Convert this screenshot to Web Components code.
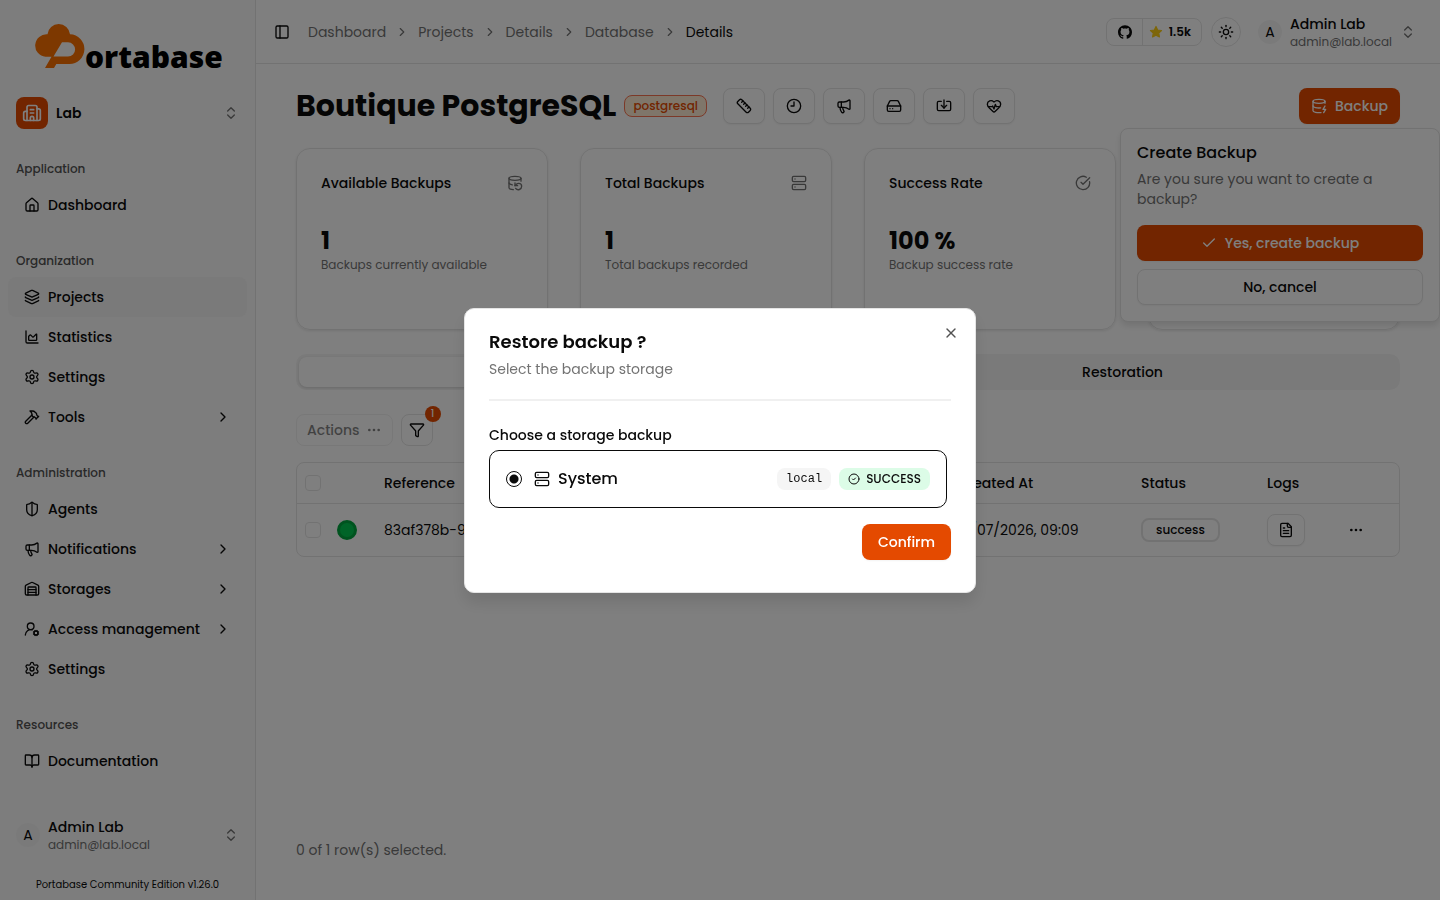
<!DOCTYPE html>
<html lang="en">
<head>
<meta charset="UTF-8">
<meta name="viewport" content="width=device-width, initial-scale=1.0">
<title>Portabase</title>
<style>
  :root {
    --primary: #e44a00;
    --text: #0a0a0a;
    --muted: #737373;
    --border: #e5e5e5;
    --accent: #f5f5f5;
    --sidebar: #fafafa;
  }
  body {
    margin: 0;
    background: #fff;
    color: var(--text);
    font-family: Poppins, Inter, sans-serif;
    font-size: 14px;
    line-height: 20px;
  }
</style>
</head>
<body>
<app-layout>
  <app-sidebar slot="sidebar">
    <nav-section heading="Application">
      <nav-item icon="house">Dashboard</nav-item>
    </nav-section>
    <nav-section heading="Organization">
      <nav-item icon="layers" active>Projects</nav-item>
      <nav-item icon="chart">Statistics</nav-item>
      <nav-item icon="settings">Settings</nav-item>
      <nav-item icon="hammer" expandable>Tools</nav-item>
    </nav-section>
    <nav-section heading="Administration">
      <nav-item icon="shield">Agents</nav-item>
      <nav-item icon="megaphone" expandable>Notifications</nav-item>
      <nav-item icon="warehouse" expandable>Storages</nav-item>
      <nav-item icon="user-cog" expandable>Access management</nav-item>
      <nav-item icon="settings">Settings</nav-item>
    </nav-section>
    <nav-section heading="Resources">
      <nav-item icon="book">Documentation</nav-item>
    </nav-section>
  </app-sidebar>

  <app-topbar slot="topbar"></app-topbar>

  <page-header heading="Boutique PostgreSQL" tag="postgresql">
    <app-button icon="ruler" label="Health thresholds"></app-button>
    <app-button icon="clock" label="Schedule"></app-button>
    <app-button icon="megaphone" label="Notifications"></app-button>
    <app-button icon="drive" label="Storage"></app-button>
    <app-button icon="import" label="Import"></app-button>
    <app-button icon="pulse" label="Health"></app-button>
    <backup-popover slot="end"></backup-popover>
  </page-header>

  <stat-grid>
    <stat-card icon="db-backup" heading="Available Backups" value="1">Backups currently available</stat-card>
    <stat-card icon="server" heading="Total Backups" value="1">Total backups recorded</stat-card>
    <stat-card icon="check-big" heading="Success Rate" value="100 %">Backup success rate</stat-card>
    <stat-card></stat-card>
  </stat-grid>

  <tab-bar></tab-bar>
  <backup-table></backup-table>
</app-layout>
<restore-dialog></restore-dialog>

<script>
  const DB_TOP = '<ellipse cx="12" cy="5" rx="9" ry="3"/>';

  const ICONS = {
    house: '<path d="M15 21v-8a1 1 0 0 0-1-1h-4a1 1 0 0 0-1 1v8"/><path d="M3 10a2 2 0 0 1 .709-1.528l7-5.999a2 2 0 0 1 2.582 0l7 5.999A2 2 0 0 1 21 10v9a2 2 0 0 1-2 2H5a2 2 0 0 1-2-2z"/>',
    layers: '<path d="M12.83 2.18a2 2 0 0 0-1.66 0L2.6 6.08a1 1 0 0 0 0 1.83l8.58 3.91a2 2 0 0 0 1.66 0l8.58-3.9a1 1 0 0 0 0-1.83z"/><path d="M2 12a1 1 0 0 0 .58.91l8.6 3.91a2 2 0 0 0 1.65 0l8.58-3.9A1 1 0 0 0 22 12"/><path d="M2 17a1 1 0 0 0 .58.91l8.6 3.91a2 2 0 0 0 1.65 0l8.58-3.9A1 1 0 0 0 22 17"/>',
    chart: '<path d="M3 3v16a2 2 0 0 0 2 2h16"/><path d="M7 11.207a.5.5 0 0 1 .146-.353l2-2a.5.5 0 0 1 .708 0l3.292 3.292a.5.5 0 0 0 .708 0l4.292-4.292a.5.5 0 0 1 .854.353V16a1 1 0 0 1-1 1H8a1 1 0 0 1-1-1z"/>',
    settings: '<path d="M9.671 4.136a2.34 2.34 0 0 1 4.659 0 2.34 2.34 0 0 0 3.319 1.915 2.34 2.34 0 0 1 2.33 4.033 2.34 2.34 0 0 0 0 3.831 2.34 2.34 0 0 1-2.33 4.033 2.34 2.34 0 0 0-3.319 1.915 2.34 2.34 0 0 1-4.659 0 2.34 2.34 0 0 0-3.32-1.915 2.34 2.34 0 0 1-2.33-4.033 2.34 2.34 0 0 0 0-3.831A2.34 2.34 0 0 1 6.35 6.051a2.34 2.34 0 0 0 3.319-1.915"/><circle cx="12" cy="12" r="3"/>',
    hammer: '<path d="m15 12-9.373 9.373a1 1 0 0 1-3.001-3L12 9"/><path d="m18 15 4-4"/><path d="m21.5 11.5-1.914-1.914A2 2 0 0 1 19 8.172v-.344a2 2 0 0 0-.586-1.414l-1.657-1.657A6 6 0 0 0 12.516 3H9l1.243 1.243A6 6 0 0 1 12 8.485V10l2 2h1.172a2 2 0 0 1 1.414.586L18.5 14.5"/>',
    shield: '<path d="M20 13c0 5-3.5 7.5-7.66 8.95a1 1 0 0 1-.67-.01C7.5 20.5 4 18 4 13V6a1 1 0 0 1 1-1c2 0 4.5-1.2 6.24-2.72a1.17 1.17 0 0 1 1.52 0C14.51 3.81 17 5 19 5a1 1 0 0 1 1 1z"/><path d="M12 22V2"/>',
    megaphone: '<path d="M11 6a13 13 0 0 0 8.4-2.8A1 1 0 0 1 21 4v12a1 1 0 0 1-1.6.8A13 13 0 0 0 11 14H5a2 2 0 0 1-2-2V8a2 2 0 0 1 2-2z"/><path d="M6 14a12 12 0 0 0 2.4 7.2 2 2 0 0 0 3.2-2.4A8 8 0 0 1 10 14"/><path d="M8 6v8"/>',
    warehouse: '<path d="M18 21V10a1 1 0 0 0-1-1H7a1 1 0 0 0-1 1v11"/><path d="M22 19a2 2 0 0 1-2 2H4a2 2 0 0 1-2-2V8a2 2 0 0 1 1.132-1.803l7.95-3.974a2 2 0 0 1 1.837 0l7.948 3.974A2 2 0 0 1 22 8z"/><path d="M6 13h12"/><path d="M6 17h12"/>',
    'user-cog': '<path d="m14.305 19.53.923-.382"/><path d="m15.228 16.852-.923-.383"/><path d="m16.852 15.228-.383-.923"/><path d="m16.852 20.772-.383.924"/><path d="m19.148 15.228.383-.923"/><path d="m19.53 21.696-.382-.924"/><path d="M2 21a8 8 0 0 1 10.434-7.62"/><path d="m20.772 16.852.924-.383"/><path d="m20.772 19.148.924.383"/><circle cx="10" cy="8" r="5"/><circle cx="18" cy="18" r="3"/>',
    book: '<path d="M12 7v14"/><path d="M3 18a1 1 0 0 1-1-1V4a1 1 0 0 1 1-1h5a4 4 0 0 1 4 4 4 4 0 0 1 4-4h5a1 1 0 0 1 1 1v13a1 1 0 0 1-1 1h-6a3 3 0 0 0-3 3 3 3 0 0 0-3-3z"/>',
    building: '<path d="M10 12h4"/><path d="M10 8h4"/><path d="M14 21v-3a2 2 0 0 0-4 0v3"/><path d="M6 10H4a2 2 0 0 0-2 2v7a2 2 0 0 0 2 2h16a2 2 0 0 0 2-2V9a2 2 0 0 0-2-2h-2"/><path d="M6 21V5a2 2 0 0 1 2-2h8a2 2 0 0 1 2 2v16"/>',
    updown: '<path d="m7 15 5 5 5-5"/><path d="m7 9 5-5 5 5"/>',
    chevron: '<path d="m9 18 6-6-6-6"/>',
    panel: '<rect width="18" height="18" x="3" y="3" rx="2"/><path d="M9 3v18"/>',
    sun: '<circle cx="12" cy="12" r="4"/><path d="M12 2v2"/><path d="M12 20v2"/><path d="m4.93 4.93 1.41 1.41"/><path d="m17.66 17.66 1.41 1.41"/><path d="M2 12h2"/><path d="M20 12h2"/><path d="m6.34 17.66-1.41 1.41"/><path d="m19.07 4.93-1.41 1.41"/>',
    github: '<path fill="currentColor" stroke="none" d="M12 .297c-6.63 0-12 5.373-12 12 0 5.303 3.438 9.8 8.205 11.385.6.113.82-.258.82-.577 0-.285-.01-1.04-.015-2.04-3.338.724-4.042-1.61-4.042-1.61C4.422 18.07 3.633 17.7 3.633 17.7c-1.087-.744.084-.729.084-.729 1.205.084 1.838 1.236 1.838 1.236 1.07 1.835 2.809 1.305 3.495.998.108-.776.417-1.305.76-1.605-2.665-.3-5.466-1.332-5.466-5.93 0-1.31.465-2.38 1.235-3.22-.135-.303-.54-1.523.105-3.176 0 0 1.005-.322 3.3 1.23.96-.267 1.98-.399 3-.405 1.02.006 2.04.138 3 .405 2.28-1.552 3.285-1.23 3.285-1.23.645 1.653.24 2.873.12 3.176.765.84 1.23 1.91 1.23 3.22 0 4.61-2.805 5.625-5.475 5.92.42.36.81 1.096.81 2.22 0 1.606-.015 2.896-.015 3.286 0 .315.21.69.825.57C20.565 22.092 24 17.592 24 12.297c0-6.627-5.373-12-12-12"/>',
    star: '<path fill="#facc15" stroke="#facc15" d="m12 2.5 2.9 6 6.6.9-4.8 4.6 1.2 6.5-5.9-3.1-5.9 3.1 1.2-6.5L2.5 9.4l6.6-.9z"/>',
    ruler: '<path d="M21.3 15.3a2.4 2.4 0 0 1 0 3.4l-2.6 2.6a2.4 2.4 0 0 1-3.4 0L2.7 8.7a2.41 2.41 0 0 1 0-3.4l2.6-2.6a2.41 2.41 0 0 1 3.4 0Z"/><path d="m14.5 12.5 2-2"/><path d="m11.5 9.5 2-2"/><path d="m8.5 6.5 2-2"/><path d="m17.5 15.5 2-2"/>',
    clock: '<circle cx="12" cy="12" r="10"/><path d="M12 6v6H7.5"/>',
    drive: '<path d="M22 12H2"/><path d="M5.45 5.11 2 12v6a2 2 0 0 0 2 2h16a2 2 0 0 0 2-2v-6l-3.45-6.89A2 2 0 0 0 16.76 4H7.24a2 2 0 0 0-1.79 1.11z"/><path d="M6 16h.01"/><path d="M10 16h.01"/>',
    import: '<path d="M12 3v12"/><path d="m8 11 4 4 4-4"/><path d="M8 5H4a2 2 0 0 0-2 2v10a2 2 0 0 0 2 2h16a2 2 0 0 0 2-2V7a2 2 0 0 0-2-2h-4"/>',
    pulse: '<path d="M2 9.5a5.5 5.5 0 0 1 9.591-3.676.56.56 0 0 0 .818 0A5.49 5.49 0 0 1 22 9.5c0 2.29-1.5 4-3 5.5l-5.492 5.313a2 2 0 0 1-3 .019L5 15c-1.5-1.5-3-3.2-3-5.5"/><path d="M3.22 13H9.5l.5-1 2 4.5 2-7 1.5 3.5h5.27"/>',
    'db-zap': DB_TOP + '<path d="M3 5V19A9 3 0 0 0 15 21.84"/><path d="M21 5V8"/><path d="M21 12L18 17H22L19 22"/><path d="M3 12A9 3 0 0 0 14.59 14.87"/>',
    'db-backup': DB_TOP + '<path d="M3 12a9 3 0 0 0 5 2.69"/><path d="M21 9.3V5"/><path d="M3 5v14a9 3 0 0 0 6.47 2.88"/><path d="M12 12v4h4"/><path d="M13 20a5 5 0 0 0 9-3 4.5 4.5 0 0 0-4.5-4.5c-1.33 0-2.54.54-3.41 1.41L12 16"/>',
    server: '<rect width="20" height="8" x="2" y="2" rx="2"/><rect width="20" height="8" x="2" y="14" rx="2"/><path d="M6 6h.01"/><path d="M6 18h.01"/>',
    'check-big': '<path d="M21.801 10A10 10 0 1 1 17 3.335"/><path d="m9 11 3 3L22 4"/>',
    'check-circle': '<circle cx="12" cy="12" r="10"/><path d="m9 12 2 2 4-4"/>',
    check: '<path d="M20 6 9 17l-5-5"/>',
    x: '<path d="M18 6 6 18"/><path d="m6 6 12 12"/>',
    dots: '<circle cx="12" cy="12" r="1"/><circle cx="19" cy="12" r="1"/><circle cx="5" cy="12" r="1"/>',
    funnel: '<path d="M10 20a1 1 0 0 0 .553.895l2 1A1 1 0 0 0 14 21v-7a2 2 0 0 1 .517-1.341L21.74 4.67A1 1 0 0 0 21 3H3a1 1 0 0 0-.742 1.67l7.225 7.989A2 2 0 0 1 10 14z"/>',
    file: '<path d="M15 2H6a2 2 0 0 0-2 2v16a2 2 0 0 0 2 2h12a2 2 0 0 0 2-2V7Z"/><path d="M14 2v4a2 2 0 0 0 2 2h4"/><path d="M10 9H8"/><path d="M16 13H8"/><path d="M16 17H8"/>'
  };

  const BASE = `
    * { margin: 0; padding: 0; box-sizing: border-box; }
    :host { display: block; box-sizing: border-box; }
    button { font: inherit; color: inherit; background: none; border: none; cursor: pointer; }
    a { color: inherit; text-decoration: none; }
  `;

  class BaseElement extends HTMLElement {
    connectedCallback() {
      if (this.shadowRoot) return;
      this.attachShadow({ mode: 'open' });
      this.shadowRoot.innerHTML = `<style>${BASE}${this.styles()}</style>${this.render()}`;
    }
  }

  class AppIcon extends BaseElement {
    styles() {
      return `
        :host { display: inline-flex; flex: none; width: 16px; height: 16px; }
        svg { width: 100%; height: 100%; }
      `;
    }
    render() {
      return `<svg viewBox="0 0 24 24" fill="none" stroke="currentColor" stroke-width="2" stroke-linecap="round" stroke-linejoin="round" aria-hidden="true">${ICONS[this.getAttribute('name')]}</svg>`;
    }
  }
  customElements.define('app-icon', AppIcon);

  class AppButton extends BaseElement {
    styles() {
      return `
        button {
          display: flex;
          align-items: center;
          justify-content: center;
          gap: 8px;
          width: 100%;
          height: 36px;
          padding: 0 12px;
          border: 1px solid var(--border);
          border-radius: 8px;
          background: #fff;
          box-shadow: 0 1px 2px rgba(0, 0, 0, 0.05);
          font-weight: 500;
        }
        :host(:not([icon])) button { padding: 0 16px; }
        :host([variant="primary"]) button {
          border: none;
          background: var(--primary);
          color: #fff;
        }
        :host([label]) button { width: 42px; }
        :host([size="sm"]) button { height: 32px; width: 38px; padding: 0; }
      `;
    }
    render() {
      const icon = this.getAttribute('icon');
      const label = this.getAttribute('label');
      return `
        <button type="button" ${label ? `aria-label="${label}"` : ''}>
          ${icon ? `<app-icon name="${icon}"></app-icon>` : ''}<slot></slot>
        </button>
      `;
    }
  }
  customElements.define('app-button', AppButton);

  class UserMenu extends BaseElement {
    styles() {
      return `
        button { display: flex; align-items: center; width: 100%; gap: 8px; text-align: left; }
        .avatar {
          display: grid;
          place-items: center;
          width: 24px;
          height: 24px;
          border-radius: 50%;
          background: var(--accent);
        }
        .who { flex: 1; }
        .name { display: block; font-weight: 500; }
        .mail { display: block; font-size: 12px; line-height: 16px; color: var(--muted); }
        app-icon { color: var(--muted); }
      `;
    }
    render() {
      return `
        <button type="button">
          <span class="avatar">A</span>
          <span class="who"><span class="name">Admin Lab</span><span class="mail">admin@lab.local</span></span>
          <app-icon name="updown"></app-icon>
        </button>
      `;
    }
  }
  customElements.define('user-menu', UserMenu);

  class AppLayout extends BaseElement {
    styles() {
      return `
        :host { display: flex; min-height: 100vh; }
        ::slotted([slot="sidebar"]) { flex: 0 0 256px; }
        .page { flex: 1; min-width: 0; display: flex; flex-direction: column; }
        main {
          flex: 1;
          display: flex;
          flex-direction: column;
          gap: 24px;
          padding: 24px 40px 40px;
        }
      `;
    }
    render() {
      return `
        <slot name="sidebar"></slot>
        <div class="page">
          <slot name="topbar"></slot>
          <main><slot></slot></main>
        </div>
      `;
    }
  }
  customElements.define('app-layout', AppLayout);

  class AppLogo extends BaseElement {
    styles() {
      return `
        :host { display: flex; align-items: flex-end; height: 46px; }
        svg { width: 50px; height: 46px; flex: none; }
        span {
          font-family: "Noto Sans", sans-serif;
          font-size: 30px;
          font-weight: 900;
          line-height: 26px;
          color: #000;
        }
      `;
    }
    render() {
      return `
        <svg viewBox="1 1 50 46" fill="#fb7000" aria-hidden="true">
          <path fill-rule="evenodd" d="M13.5 11.3 A11.3 11.3 0 0 1 36 11.2 A14.6 14.6 0 0 1 35 41 H22.3 L20 45 H11 L17.5 33.8 H11.5 A11.2 11.2 0 1 1 13.5 11.3 Z M28 19.3 L19.5 33.5 H34 A7.1 7.1 0 0 0 34 19.3 Z"/>
        </svg>
        <span>ortabase</span>
      `;
    }
  }
  customElements.define('app-logo', AppLogo);

  class AppSidebar extends BaseElement {
    styles() {
      return `
        :host {
          display: flex;
          flex-direction: column;
          background: var(--sidebar);
          border-right: 1px solid var(--border);
        }
        app-logo { margin: 24px 16px 0 35px; }
        .org {
          display: flex;
          align-items: center;
          gap: 8px;
          margin: 27px 16px 24px;
          font-weight: 600;
          text-align: left;
        }
        .org span { flex: 1; }
        .badge {
          display: grid;
          place-items: center;
          width: 32px;
          height: 32px;
          border-radius: 8px;
          background: var(--primary);
          color: #fff;
        }
        .badge app-icon { width: 20px; height: 20px; }
        .org > app-icon { color: var(--muted); }
        nav { flex: 1; display: flex; flex-direction: column; gap: 20px; padding: 0 8px; }
        user-menu { margin: 0 16px; }
        .version { padding: 24px 0 7px; text-align: center; font-size: 10px; line-height: 16px; }
      `;
    }
    render() {
      return `
        <app-logo></app-logo>
        <button class="org" type="button">
          <i class="badge"><app-icon name="building"></app-icon></i>
          <span>Lab</span>
          <app-icon name="updown"></app-icon>
        </button>
        <nav><slot></slot></nav>
        <user-menu></user-menu>
        <p class="version">Portabase Community Edition v1.26.0</p>
      `;
    }
  }
  customElements.define('app-sidebar', AppSidebar);

  class NavSection extends BaseElement {
    styles() {
      return `
        h2 {
          padding: 0 8px;
          font-size: 12px;
          font-weight: 500;
          line-height: 32px;
          color: #525252;
        }
      `;
    }
    render() {
      return `<h2>${this.getAttribute('heading')}</h2><slot></slot>`;
    }
  }
  customElements.define('nav-section', NavSection);

  class NavItem extends BaseElement {
    styles() {
      return `
        a {
          display: flex;
          align-items: center;
          gap: 8px;
          height: 40px;
          padding: 0 16px;
          border-radius: 8px;
          font-weight: 500;
        }
        span { flex: 1; white-space: nowrap; }
        :host([active]) a { background: var(--accent); }
      `;
    }
    render() {
      return `
        <a href="#">
          <app-icon name="${this.getAttribute('icon')}"></app-icon>
          <span><slot></slot></span>
          ${this.hasAttribute('expandable') ? '<app-icon name="chevron"></app-icon>' : ''}
        </a>
      `;
    }
  }
  customElements.define('nav-item', NavItem);

  class AppTopbar extends BaseElement {
    styles() {
      return `
        :host {
          display: flex;
          align-items: center;
          height: 64px;
          padding: 0 24px 0 18px;
          border-bottom: 1px solid var(--border);
        }
        .toggle { display: flex; margin-right: 18px; }
        ol { display: flex; align-items: center; gap: 9px; flex: 1; list-style: none; color: var(--muted); }
        ol app-icon { width: 14px; height: 14px; }
        li { display: flex; }
        [aria-current] { color: var(--text); }
        .github {
          display: flex;
          height: 28px;
          border: 1px solid var(--border);
          border-radius: 8px;
          font-size: 12px;
          font-weight: 600;
        }
        .github span { display: flex; align-items: center; gap: 6px; padding: 0 10px 0 6px; }
        .github span:first-child { padding: 0 10px 0 11px; border-right: 1px solid var(--border); }
        .github app-icon { width: 14px; height: 14px; }
        .theme {
          display: grid;
          place-items: center;
          width: 30px;
          height: 30px;
          margin: 0 17px 0 9px;
          border: 1px solid var(--border);
          border-radius: 50%;
        }
      `;
    }
    render() {
      const crumbs = ['Dashboard', 'Projects', 'Details', 'Database'];
      return `
        <button class="toggle" type="button" aria-label="Toggle sidebar"><app-icon name="panel"></app-icon></button>
        <ol>
          ${crumbs.map(c => `<li><a href="#">${c}</a></li><li><app-icon name="chevron"></app-icon></li>`).join('')}
          <li aria-current="page">Details</li>
        </ol>
        <a class="github" href="#" aria-label="GitHub stars">
          <span><app-icon name="github"></app-icon></span>
          <span><app-icon name="star"></app-icon>1.5k</span>
        </a>
        <button class="theme" type="button" aria-label="Theme"><app-icon name="sun"></app-icon></button>
        <user-menu></user-menu>
      `;
    }
  }
  customElements.define('app-topbar', AppTopbar);

  class PageHeader extends BaseElement {
    styles() {
      return `
        :host { display: flex; align-items: center; height: 36px; }
        h1 { font-size: 30px; line-height: 36px; font-weight: 700; white-space: nowrap; }
        .tag {
          margin: 0 16px 0 8px;
          padding: 0 8px;
          border: 1px solid #f97350;
          border-radius: 8px;
          background: #ffedd5;
          color: var(--primary);
          font-size: 12px;
          font-weight: 500;
        }
        .actions { display: flex; flex: 1; gap: 8px; }
      `;
    }
    render() {
      return `
        <h1>${this.getAttribute('heading')}</h1>
        <span class="tag">${this.getAttribute('tag')}</span>
        <div class="actions"><slot></slot></div>
        <slot name="end"></slot>
      `;
    }
  }
  customElements.define('page-header', PageHeader);

  class BackupPopover extends BaseElement {
    styles() {
      return `
        :host { position: relative; }
        .popover {
          position: absolute;
          z-index: 1;
          top: calc(100% + 4px);
          right: -40px;
          width: 320px;
          display: flex;
          flex-direction: column;
          gap: 8px;
          padding: 16px;
          border: 1px solid var(--border);
          border-radius: 8px;
          background: #fff;
          box-shadow: 0 4px 6px rgba(0, 0, 0, 0.1);
        }
        h2 { font-size: 16px; line-height: 16px; font-weight: 500; }
        p { margin-bottom: 8px; color: var(--muted); }
      `;
    }
    render() {
      return `
        <app-button variant="primary" icon="db-zap">Backup</app-button>
        <div class="popover">
          <h2>Create Backup</h2>
          <p>Are you sure you want to create a backup?</p>
          <app-button variant="primary" icon="check">Yes, create backup</app-button>
          <app-button>No, cancel</app-button>
        </div>
      `;
    }
  }
  customElements.define('backup-popover', BackupPopover);

  class StatGrid extends BaseElement {
    styles() {
      return `:host { display: grid; grid-template-columns: repeat(4, minmax(0, 1fr)); gap: 32px; }`;
    }
    render() {
      return '<slot></slot>';
    }
  }
  customElements.define('stat-grid', StatGrid);

  class StatCard extends BaseElement {
    styles() {
      return `
        :host {
          min-height: 182px;
          padding: 24px;
          border: 1px solid var(--border);
          border-radius: 14px;
          box-shadow: 0 1px 3px rgba(0, 0, 0, 0.1);
        }
        header { display: flex; align-items: center; justify-content: space-between; margin-bottom: 32px; }
        header app-icon { color: var(--muted); }
        h3 { font-size: 14px; font-weight: 500; }
        strong { display: block; font-size: 24px; line-height: 32px; }
        p { font-size: 12px; line-height: 16px; color: var(--muted); }
      `;
    }
    render() {
      if (!this.hasAttribute('heading')) return '';
      return `
        <header><h3>${this.getAttribute('heading')}</h3><app-icon name="${this.getAttribute('icon')}"></app-icon></header>
        <strong>${this.getAttribute('value')}</strong>
        <p><slot></slot></p>
      `;
    }
  }
  customElements.define('stat-card', StatCard);

  class TabBar extends BaseElement {
    styles() {
      return `
        :host { display: grid; grid-template-columns: 1fr 1fr; height: 36px; padding: 3px; border-radius: 10px; background: var(--accent); }
        button { border-radius: 8px; font-weight: 500; }
        [aria-selected="true"] { background: #fff; box-shadow: 0 1px 3px rgba(0, 0, 0, 0.15); }
      `;
    }
    render() {
      return `
        <button type="button" role="tab" aria-selected="true" aria-label="Backup"></button>
        <button type="button" role="tab" aria-selected="false">Restoration</button>
      `;
    }
  }
  customElements.define('tab-bar', TabBar);

  class BackupTable extends BaseElement {
    styles() {
      return `
        :host { flex: 1; display: flex; flex-direction: column; }
        .toolbar { display: flex; gap: 8px; margin-bottom: 16px; }
        .toolbar button {
          display: flex;
          align-items: center;
          justify-content: center;
          gap: 6px;
          height: 32px;
          border: 1px solid var(--border);
          border-radius: 8px;
          font-weight: 500;
        }
        .actions { padding: 0 10px; opacity: 0.5; }
        .filter { position: relative; width: 32px; }
        .count {
          position: absolute;
          top: -9px;
          right: -9px;
          width: 16px;
          height: 16px;
          border-radius: 50%;
          background: var(--primary);
          color: #fff;
          font-size: 10px;
          line-height: 16px;
        }
        .frame { border: 1px solid var(--border); border-radius: 8px; }
        table { width: 100%; table-layout: fixed; border-collapse: collapse; text-align: left; }
        th, td { padding: 0 8px; white-space: nowrap; }
        th { height: 40px; font-weight: 500; }
        td { height: 53px; border-top: 1px solid var(--border); }
        .select { width: 32px; }
        .state { width: 47px; }
        .created { width: 184px; }
        .status { width: 126px; }
        .logs { width: 73px; }
        .more { width: 67px; }
        input {
          appearance: none;
          display: block;
          width: 16px;
          height: 16px;
          border: 1px solid var(--border);
          border-radius: 4px;
        }
        .dot { display: block; width: 20px; height: 20px; border: 3px solid #00a63e; border-radius: 50%; background: #00c950; }
        .pill {
          display: inline-block;
          padding: 0 13px;
          border: 2px solid var(--border);
          border-radius: 8px;
          font-size: 12px;
          font-weight: 500;
        }
        td button { display: grid; place-items: center; width: 32px; height: 32px; }
        .selected { margin-top: auto; color: var(--muted); }
      `;
    }
    render() {
      return `
        <div class="toolbar">
          <button class="actions" type="button" disabled>Actions <app-icon name="dots"></app-icon></button>
          <button class="filter" type="button" aria-label="Filter"><app-icon name="funnel"></app-icon><span class="count">1</span></button>
        </div>
        <div class="frame">
          <table>
            <thead>
              <tr>
                <th class="select"><input type="checkbox" aria-label="Select all"></th>
                <th class="state"></th>
                <th>Reference</th>
                <th class="created">Created At</th>
                <th class="status">Status</th>
                <th class="logs">Logs</th>
                <th class="more"></th>
              </tr>
            </thead>
            <tbody>
              <tr>
                <td><input type="checkbox" aria-label="Select row"></td>
                <td><i class="dot"></i></td>
                <td>83af378b-9</td>
                <td>10/07/2026, 09:09</td>
                <td><span class="pill">success</span></td>
                <td><app-button icon="file" size="sm" label="Logs"></app-button></td>
                <td><button type="button" aria-label="More"><app-icon name="dots"></app-icon></button></td>
              </tr>
            </tbody>
          </table>
        </div>
        <p class="selected">0 of 1 row(s) selected.</p>
      `;
    }
  }
  customElements.define('backup-table', BackupTable);

  class RestoreDialog extends BaseElement {
    styles() {
      return `
        :host {
          position: fixed;
          inset: 0;
          z-index: 50;
          display: grid;
          place-items: center;
          background: rgba(0, 0, 0, 0.5);
        }
        dialog {
          position: relative;
          width: min(512px, 100%);
          padding: 24px;
          border: 1px solid var(--border);
          border-radius: 10px;
          background: #fff;
          color: inherit;
          box-shadow: 0 10px 15px rgba(0, 0, 0, 0.1);
        }
        header { padding-bottom: 20px; border-bottom: 2px solid #f0f0f0; }
        h2 { font-size: 18px; line-height: 18px; font-weight: 600; margin-bottom: 8px; }
        p { color: var(--muted); }
        .close { position: absolute; top: 16px; right: 16px; display: flex; color: #525252; }
        fieldset { border: none; margin: 24px 4px 16px 0; }
        legend { font-weight: 500; padding-bottom: 5px; }
        label {
          display: flex;
          align-items: center;
          height: 58px;
          padding: 0 16px;
          border: 1px solid var(--text);
          border-radius: 10px;
          font-size: 16px;
          font-weight: 500;
        }
        input {
          appearance: none;
          width: 16px;
          height: 16px;
          margin-right: 12px;
          border: 1px solid var(--text);
          border-radius: 50%;
          background: radial-gradient(circle, var(--text) 4px, transparent 5px);
        }
        .name { flex: 1; margin-left: 8px; }
        .tag { padding: 0 9px; border-radius: 8px; font-size: 12px; line-height: 22px; }
        .type { background: var(--accent); font-family: "Liberation Mono", monospace; font-weight: 400; }
        .ok {
          display: flex;
          align-items: center;
          gap: 6px;
          margin-left: 8px;
          background: #dcfce7;
        }
        .ok app-icon { width: 12px; height: 12px; }
        footer { display: flex; justify-content: flex-end; padding-bottom: 8px; }
      `;
    }
    render() {
      return `
        <dialog open aria-labelledby="title">
          <header>
            <h2 id="title">Restore backup ?</h2>
            <p>Select the backup storage</p>
          </header>
          <button class="close" type="button" aria-label="Close"><app-icon name="x"></app-icon></button>
          <fieldset>
            <legend>Choose a storage backup</legend>
            <label>
              <input type="radio" name="storage" checked>
              <app-icon name="server"></app-icon>
              <span class="name">System</span>
              <span class="tag type">local</span>
              <span class="tag ok"><app-icon name="check-circle"></app-icon>SUCCESS</span>
            </label>
          </fieldset>
          <footer><app-button variant="primary">Confirm</app-button></footer>
        </dialog>
      `;
    }
  }
  customElements.define('restore-dialog', RestoreDialog);
</script>
</body>
</html>
